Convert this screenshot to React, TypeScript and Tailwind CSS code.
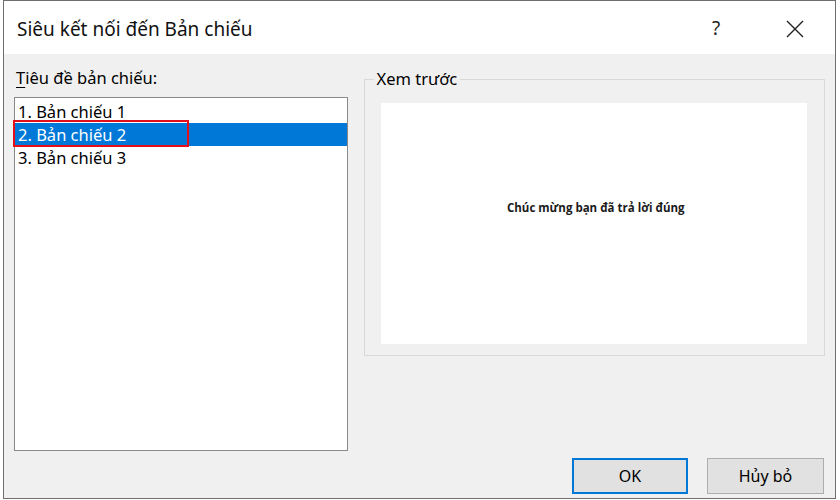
import React from "react";

const font = { fontFamily: '"Noto Sans", "Open Sans", sans-serif' };

export default function App() {
  const items = ["1. Bản chiếu 1", "2. Bản chiếu 2", "3. Bản chiếu 3"];
  return (
    <div className="w-[840px] h-[500px] bg-white overflow-hidden text-black" style={font}>
      <div className="ml-[3px] w-[833px] h-[499px] border border-[#6e6e6e] flex flex-col bg-[#f0f0f0]">
        {/* Title bar */}
        <div className="h-[53px] bg-white flex items-center pl-[13px] pr-[31px]">
          <div className="text-[19px] leading-none flex-1 pt-[3px] text-[#111]">Siêu kết nối đến Bản chiếu</div>
          <div className="text-[19px] leading-none w-[20px] text-center mr-[60px] text-[#222] pt-[2px]">?</div>
          <svg width="18" height="18" viewBox="0 0 18 18" className="mt-[2px]">
            <path d="M1 1 L17 17 M17 1 L1 17" stroke="#222" strokeWidth="1.4" fill="none" />
          </svg>
        </div>
        {/* Body */}
        <div className="flex-1 flex flex-col pl-[10px] pr-[10px]">
          <div className="flex gap-[16px] pt-[13px]">
            {/* Left column */}
            <div className="w-[334px] flex flex-col">
              <div className="text-[16.5px] leading-[22px] pl-[2px]">
                <span className="underline underline-offset-[3px]">T</span>iêu đề bản chiếu:
              </div>
              <div className="relative mt-[8px] h-[354px] bg-white border border-[#8a8a8a] pt-[2px]">
                {items.map((t, i) => (
                  <div
                    key={t}
                    className={
                      "h-[23px] leading-[23px] pl-[3px] text-[16.5px] " +
                      (i === 1 ? "bg-[#0078d7] text-white" : "text-black")
                    }
                  >
                    {t}
                  </div>
                ))}
                <div className="absolute left-[-2px] top-[22px] w-[176px] h-[27px] border-[2.5px] border-[#e3101c]" />
              </div>
            </div>
            {/* Right column */}
            <div className="w-[462px] pt-[12px]">
              <div className="relative h-[277px] border border-[#d9d9d9] pt-[23px] pl-[16px] pr-[17px] pb-[11px]">
                <span className="absolute -top-[12px] left-[9px] px-[3px] bg-[#f0f0f0] text-[16.5px] leading-[22px]">
                  Xem trước
                </span>
                <div className="h-full bg-white flex justify-center pt-[99px] pl-[4px]">
                  <span className="text-[11.5px] font-bold text-[#1a1a1a] leading-none" style={{ fontFamily: '"Open Sans", sans-serif' }}>
                    Chúc mừng bạn đã trả lời đúng
                  </span>
                </div>
              </div>
            </div>
          </div>
          {/* Buttons */}
          <div className="flex justify-end gap-[19px] mt-auto mb-[4px] pr-[1px]">
            <button className="w-[116px] h-[36px] bg-[#e1e1e1] border-2 border-[#0078d7] text-[16px]">OK</button>
            <button className="w-[117px] h-[36px] bg-[#e1e1e1] border border-[#adadad] text-[16px]">Hủy bỏ</button>
          </div>
        </div>
      </div>
    </div>
  );
}
